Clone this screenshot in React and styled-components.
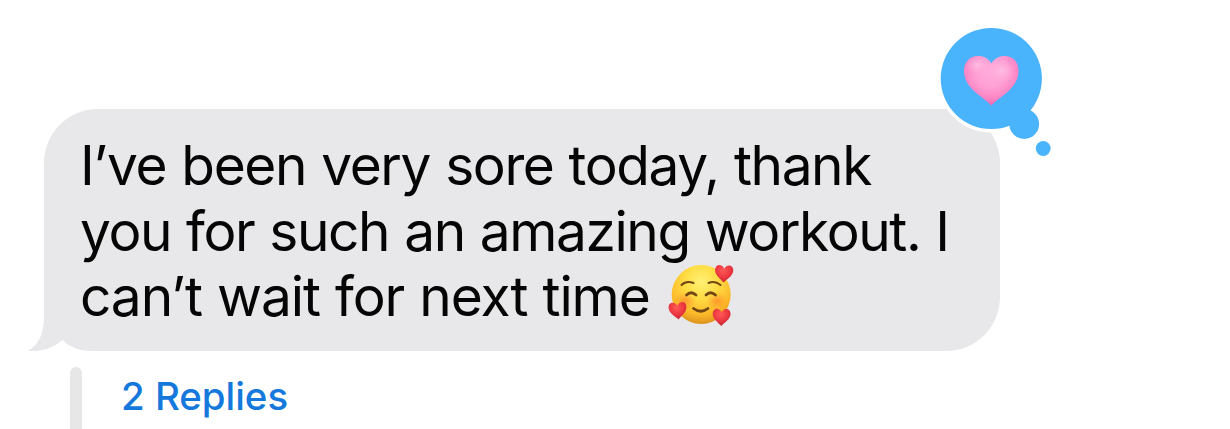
import React from "react";
import styled, { createGlobalStyle } from "styled-components";

const GlobalStyle = createGlobalStyle`
  body {
    margin: 0;
    background: #fff;
    font-family: Inter, "Liberation Sans", sans-serif;
    overflow: hidden;
  }
`;

const Thread = styled.main`
  box-sizing: border-box;
  height: 429px;
  padding: 109px 0 0 44px;
  overflow: hidden;
`;

const Bubble = styled.section`
  position: relative;
  box-sizing: border-box;
  width: 956px;
  height: 242px;
  padding: 24px 0 0 36px;
  border-radius: 54px;
  background: #e8e8ea;
`;

const Message = styled.p`
  position: relative;
  margin: 0;
  color: #050506;
  font-size: 55px;
  line-height: 65.6px;
`;

const Line = styled.span`
  display: flex;
  align-items: center;
  height: 65.6px;
  white-space: pre;
  letter-spacing: ${(p) => p.$tracking}px;
  word-spacing: ${(p) => p.$wordGap}px;
`;

const Tail = styled.svg`
  position: absolute;
  left: -18px;
  bottom: 0;
  width: 70px;
  height: 62px;
`;

const Reaction = styled.svg`
  position: absolute;
  left: 890px;
  top: -87px;
  width: 124px;
  height: 142px;
`;

const Emoji = styled.svg`
  width: 66px;
  height: 64px;
  margin: 0 0 2px 3px;
`;

const Replies = styled.div`
  display: flex;
  gap: 39px;
  padding: 16px 0 0 26px;
`;

const ThreadBar = styled.div`
  width: 12px;
  height: 90px;
  border-radius: 6px;
  background: #e7e7e8;
`;

const RepliesLink = styled.a`
  padding-top: 6px;
  color: #1478dc;
  font-size: 38.4px;
  font-weight: 500;
  line-height: 46px;
  white-space: pre;
`;

function BubbleTail() {
  return (
    <Tail viewBox="26 289 70 62">
      <path d="M43 289H96V351H92C79 351 69 347 62.500 340.500C53 348 41 352 27.500 351C39 345 44 333 44 316V289Z" fill="#e8e8ea" />
      <path d="M43 351.500H92C79 351 69 347 62.500 340C56 346 50 349 43 350.500Z" fill="#fff" />
    </Tail>
  );
}

function HeartReaction() {
  return (
    <Reaction viewBox="934 22 124 142">
      <defs>
        <radialGradient id="heartFill" gradientUnits="userSpaceOnUse" cx="991" cy="72" r="34">
          <stop offset="0" stopColor="#ffacdb" />
          <stop offset="0.45" stopColor="#ffa0d5" />
          <stop offset="0.8" stopColor="#fc83c4" />
          <stop offset="1" stopColor="#f95fab" />
        </radialGradient>
        <radialGradient id="heartShine">
          <stop offset="0" stopColor="#ffc6e6" stopOpacity="0.7" />
          <stop offset="1" stopColor="#ffb5df" stopOpacity="0" />
        </radialGradient>
      </defs>
      <g fill="#fff">
        <circle cx="991.300" cy="78.500" r="54" />
        <circle cx="1024" cy="124" r="18" />
        <circle cx="1043.200" cy="148.500" r="10" />
      </g>
      <g fill="#49b3fb">
        <circle cx="991.300" cy="78.500" r="50.600" />
        <circle cx="1024.200" cy="124" r="14.900" />
        <circle cx="1043.200" cy="148.500" r="7.400" />
      </g>
      <path d="M991.500 105.500C984 97 964 89 964 71C964 62 970 56 978 56C984 56 989 58.500 991.500 63.500C994 58.500 999 56 1005 56C1013 56 1018.500 62 1018.500 71C1018.500 89 999 97 991.500 105.500Z" fill="url(#heartFill)" />
      <ellipse cx="977" cy="65" rx="12" ry="9" fill="url(#heartShine)" />
      <ellipse cx="1002" cy="71" rx="13" ry="12" fill="url(#heartShine)" />
    </Reaction>
  );
}

const HEART = "M0 9.500C-3 6-9.500 2.500-9.500-3.500C-9.500-9.500-2.500-10.500 0-5C2.500-10.500 9.500-9.500 9.500-3.500C9.500 2.500 3 6 0 9.500Z";

function LovingFace() {
  return (
    <Emoji viewBox="667 264 66 64" role="img" aria-label="smiling face with hearts">
      <defs>
        <radialGradient id="face" cx="0.5" cy="0.28" r="0.72">
          <stop offset="0" stopColor="#fff176" />
          <stop offset="0.4" stopColor="#ffdc43" />
          <stop offset="0.78" stopColor="#fbb829" />
          <stop offset="1" stopColor="#dd931e" />
        </radialGradient>
        <radialGradient id="blush">
          <stop offset="0" stopColor="#ff7d28" stopOpacity="0.65" />
          <stop offset="1" stopColor="#ff8d28" stopOpacity="0" />
        </radialGradient>
        <radialGradient id="redHeart" cx="0.45" cy="0.3" r="0.7">
          <stop offset="0" stopColor="#ff5a55" />
          <stop offset="0.6" stopColor="#ea3640" />
          <stop offset="1" stopColor="#c42632" />
        </radialGradient>
      </defs>
      <circle cx="700.200" cy="294.500" r="29.500" fill="url(#face)" />
      <ellipse cx="684" cy="301" rx="11" ry="9" fill="url(#blush)" />
      <ellipse cx="716" cy="301" rx="11" ry="9" fill="url(#blush)" />
      <g fill="none" stroke="#714515" strokeLinecap="round">
        <path d="M680.500 285Q685 280.500 692.500 283M707.500 283Q714 280.500 719.500 285" strokeWidth="2" />
        <path d="M685.500 295Q690 290.500 695 295M705 295Q709.500 290.500 714.500 295" strokeWidth="2.800" />
        <path d="M692.500 308.500Q699.700 314 707 308.500" strokeWidth="2.800" />
      </g>
      <g fill="url(#redHeart)">
        <path d={HEART} transform="translate(723 273.500) rotate(3) scale(.96)" />
        <path d={HEART} transform="translate(676.800 310.500) rotate(-5) scale(.94)" />
        <path d={HEART} transform="translate(720.500 317) rotate(2) scale(.94)" />
      </g>
    </Emoji>
  );
}

export default function App() {
  return (
    <>
      <GlobalStyle />
      <Thread>
        <Bubble>
          <BubbleTail />
          <Message>
            <Line $tracking={-1.4} $wordGap={1.1}>I’ve been very sore today, thank</Line>
            <Line $tracking={-1.4} $wordGap={0.9}>you for such an amazing workout. I</Line>
            <Line $tracking={-1.1} $wordGap={0.8}>
              {"can’t wait for next time "}
              <LovingFace />
            </Line>
          </Message>
          <HeartReaction />
        </Bubble>
        <Replies>
          <ThreadBar />
          <RepliesLink>2 Replies</RepliesLink>
        </Replies>
      </Thread>
    </>
  );
}
